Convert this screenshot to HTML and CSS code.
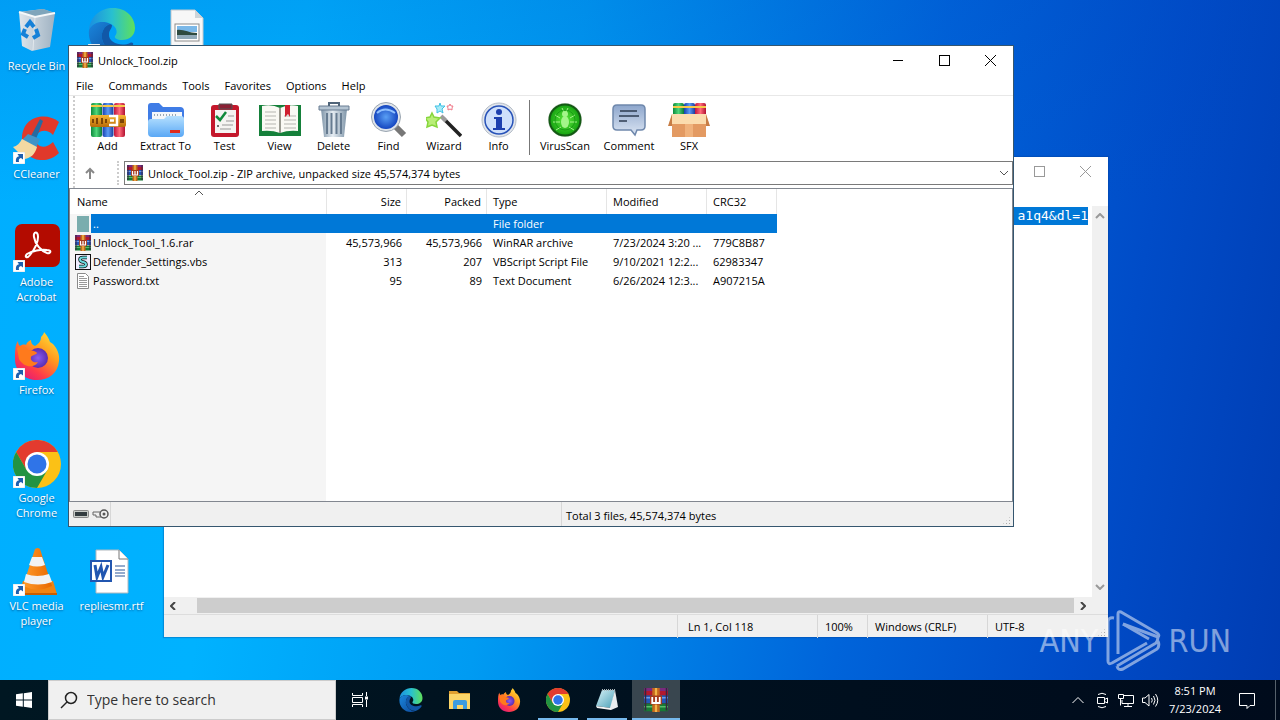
FILE: index.html
```html
<!DOCTYPE html>
<html lang="en">
<head>
<meta charset="utf-8">
<title>Desktop</title>
<link rel="stylesheet" href="styles.css">
</head>
<body>
<svg class="defs" aria-hidden="true">
  <defs>
    <linearGradient id="gRed" x1="0" x2="1"><stop offset="0" stop-color="#c0143c"/><stop offset=".5" stop-color="#ff6a7a"/><stop offset="1" stop-color="#b01030"/></linearGradient>
    <linearGradient id="gBlue" x1="0" x2="1"><stop offset="0" stop-color="#173fae"/><stop offset=".5" stop-color="#5b9bf5"/><stop offset="1" stop-color="#1b3c9c"/></linearGradient>
    <linearGradient id="gGreen" x1="0" x2="1"><stop offset="0" stop-color="#0c8a3c"/><stop offset=".5" stop-color="#4fd67a"/><stop offset="1" stop-color="#0a7a34"/></linearGradient>
    <linearGradient id="gGold" x1="0" x2="0" y1="0" y2="1"><stop offset="0" stop-color="#f7b733"/><stop offset="1" stop-color="#b86a08"/></linearGradient>
    <linearGradient id="gFolder" x1="0" x2="0" y1="0" y2="1"><stop offset="0" stop-color="#b5e0ff"/><stop offset="1" stop-color="#5aa8f5"/></linearGradient>
    <linearGradient id="gMetal" x1="0" x2="1"><stop offset="0" stop-color="#7f95a8"/><stop offset=".45" stop-color="#e6edf3"/><stop offset="1" stop-color="#7f95a8"/></linearGradient>
    <linearGradient id="gSpeech" x1="0" x2="0" y1="0" y2="1"><stop offset="0" stop-color="#8da6cc"/><stop offset="1" stop-color="#dbe5f3"/></linearGradient>
    <radialGradient id="gLens"><stop offset="0" stop-color="#5aa0f5"/><stop offset="1" stop-color="#1546c0"/></radialGradient>
    <radialGradient id="gVirus"><stop offset="0" stop-color="#5dea3c"/><stop offset="1" stop-color="#14a010"/></radialGradient>
    <linearGradient id="gFox" x1=".9" x2=".2" y1="0" y2="1"><stop offset="0" stop-color="#ffe83c"/><stop offset=".4" stop-color="#ff9a1e"/><stop offset=".75" stop-color="#ff3b4a"/><stop offset="1" stop-color="#e01a7a"/></linearGradient>
    <radialGradient id="gFoxIn"><stop offset="0" stop-color="#8a5cf0"/><stop offset="1" stop-color="#5a2cb0"/></radialGradient>
    <linearGradient id="gEdge" x1="0" x2="1"><stop offset="0" stop-color="#1b8fe0"/><stop offset=".5" stop-color="#28c0d0"/><stop offset="1" stop-color="#5fe05a"/></linearGradient>
    <linearGradient id="gEdge2" x1="0" x2="1" y1="0" y2="1"><stop offset="0" stop-color="#1a86dc"/><stop offset="1" stop-color="#0d4a9c"/></linearGradient>
    <linearGradient id="gGlass" x1="0" x2="1" y1="0" y2="1"><stop offset="0" stop-color="#d8f2f7"/><stop offset="1" stop-color="#4aa0b8"/></linearGradient>
    <linearGradient id="gCone" x1="0" x2="1"><stop offset="0" stop-color="#ff9a2a"/><stop offset="1" stop-color="#e86800"/></linearGradient>
    <linearGradient id="gBin" x1="0" x2="1"><stop offset="0" stop-color="#dfe6ec"/><stop offset="1" stop-color="#9fb2c2"/></linearGradient>
  </defs>
  <symbol id="rar" viewBox="0 0 16 16">
    <rect width="16" height="5" fill="#b3182f"/><rect width="16" height="2" fill="#7a2b7c"/>
    <rect y="5" width="16" height="5" fill="#2456b8"/><rect y="6" width="16" height="1" fill="#6f9bea"/>
    <rect y="10.500" width="16" height="5" fill="#177a35"/><rect y="12" width="16" height="1" fill="#59bc6c"/>
    <path d="M1 0v15M15 0v15" stroke="#3a2440"/>
    <rect x="5.500" width="5" height="16" fill="#c4681c"/><path d="M8 0v16" stroke="#f2b548" stroke-width="1.500"/>
    <rect x="4" y="5" width="8" height="6" fill="#a53a1c"/><path d="M5.500 6v4h5V6M8 6v4" fill="none" stroke="#fff" stroke-width="1.200"/>
  </symbol>
  <symbol id="arrow" viewBox="0 0 12 12">
    <rect width="12" height="12" fill="#fff" stroke="#b8c4cc" stroke-width=".5"/>
    <path d="M3 10C2.600 6 4 4.500 6 4.200L4.500 2H10v5.500L8 6C6 6.300 5.500 7.500 6 10z" fill="#1d5fae"/>
  </symbol>
  <symbol id="edge" viewBox="0 0 48 48">
    <path d="M1 22C2 8 13 0 25 0c14 0 22 10 22 20 0 8-6 12-13 12-5 0-8-2-7-4 3-3 2-9-4-12C15 12 5 14 1 22z" fill="url(#gEdge)"/>
    <path d="M1 22C5 14 15 12 22 16c-6 2-9 8-8 15 2 9 10 16 19 15C16 53-1 40 1 22z" fill="url(#gEdge2)"/>
    <path d="M22 16c-6 2-9 8-8 15 2 9 10 15 19 15 5-1 9-5 12-9 1-2-1-3-3-2-8 4-22 0-21-9 0-4 3-5 3-9z" fill="#1158a8"/>
  </symbol>
  <symbol id="chrome" viewBox="0 0 48 48">
    <circle cx="24" cy="24" r="24" fill="#fbc116"/>
    <path d="M3.200 12A24 24 0 0 1 44.800 12H24L13.600 30z" fill="#e33b2e"/>
    <path d="M3.200 12 13.600 30H34.400L24 48A24 24 0 0 1 3.200 12z" fill="#229342"/>
    <circle cx="24" cy="24" r="12" fill="#fff"/><circle cx="24" cy="24" r="9.500" fill="#2f74e8"/>
  </symbol>
  <symbol id="firefox" viewBox="0 0 48 48">
    <path d="M5 9c0 3 1 4 2 5 1-1 4-2 6-1 1-3 3-4 5-5 0 3 1 5 4 6 3-2 6-4 6-9 2-2 3-4 3-5 3 3 5 7 6 10l3 2c4 4 7 11 6 17-1 12-10 19-22 19S2 40 2 27C2 20 2 13 5 9z" fill="url(#gFox)"/>
    <circle cx="25" cy="26" r="10" fill="url(#gFoxIn)"/>
    <path d="M4 16c5-3 9-2 11 2 3 0 8 1 9 3-1 2-5 2-6 4-1 4 3 6 7 5-4 7-15 5-19-3z" fill="#ff7a1c"/>
  </symbol>
</svg>

<main class="desktop">
  <nav class="shortcuts" aria-label="Desktop icons">
    <a class="shortcut" href="#bin">
      <span class="pic"><svg viewBox="0 0 48 48"><path d="M6 4 30 1l12 4-5 34-18 4-10-5z" fill="url(#gBin)"/><path d="M6 4 30 1l12 4-20 4z" fill="#7fa5bb"/><path d="M6 4l16 5 20-4" fill="none" stroke="#f5f8fa" stroke-width="2"/><path d="M22 9l-2 33" stroke="#fff" opacity=".5"/><g fill="none" stroke="#1581d8" stroke-width="4"><path d="M13 19l4-5 4 5"/><path d="M23 21l2 6-5 3"/><path d="M15 29l-5-3 2-5"/></g></svg></span>
      <span>Recycle Bin</span></a>
    <a class="shortcut" href="#edge" aria-label="Browser">
      <span class="pic"><svg viewBox="0 0 48 48"><use href="#edge"/></svg><svg class="badge"><use href="#arrow"/></svg></span></a>
    <a class="shortcut" href="#picture" aria-label="Picture">
      <span class="pic"><svg viewBox="0 0 48 48"><path d="M8 2h24l8 8v36H8z" fill="#f7f7f7" stroke="#c3c8cc"/><path d="M32 2v8h8z" fill="#ccd4d9"/><rect x="12" y="16" width="24" height="17" fill="#fff" stroke="#8b8b8b"/><rect x="14" y="18" width="20" height="6" fill="#7bb8e8"/><path d="M14 22c6-1 12 3 20 3v2H14z" fill="#2f4b40"/><rect x="14" y="27" width="20" height="4" fill="#91aab9"/></svg></span></a>

    <a class="shortcut row2" href="#ccleaner">
      <span class="pic"><svg viewBox="0 0 48 48"><path d="M46 6C34-4 10-1 9 22c0 25 26 27 37 15l-6-11c-7 7-16 6-17-2-1-9 10-13 17-5z" fill="#e0392b"/><path d="M27 3l3 2-7 18-5-3z" fill="#276aa0"/><path d="M15 18l12 5-4 9-15-7z" fill="#3f93c8"/><path d="M9 23l15 8c-2 8-7 11-12 12L0 31c4-1 7-4 9-8z" fill="#f3d9a2"/></svg><svg class="badge"><use href="#arrow"/></svg></span>
      <span>CCleaner</span></a>
    <a class="shortcut row3" href="#acrobat">
      <span class="pic"><svg viewBox="0 0 48 48"><rect x="2" width="45" height="43" rx="7" fill="#b30b00"/><path d="M14 30c-3 3 0 5 3 1 4-5 8-12 8-18 0-6-5-6-4 0 1 7 7 14 13 16 4 1 5-3 0-3-6-1-15 1-20 4z" fill="none" stroke="#fff" stroke-width="2"/></svg><svg class="badge"><use href="#arrow"/></svg></span>
      <span>Adobe Acrobat</span></a>
    <a class="shortcut row4" href="#firefox">
      <span class="pic"><svg viewBox="0 0 48 48"><use href="#firefox"/></svg><svg class="badge"><use href="#arrow"/></svg></span>
      <span>Firefox</span></a>
    <a class="shortcut row5" href="#chrome">
      <span class="pic"><svg viewBox="0 0 48 48"><use href="#chrome"/></svg><svg class="badge"><use href="#arrow"/></svg></span>
      <span>Google Chrome</span></a>
    <a class="shortcut row6" href="#vlc">
      <span class="pic"><svg viewBox="0 0 48 48"><path d="M10 33h30l4 13H6z" fill="#f08412"/><path d="M6 45h38v2H6z" fill="#c95e00"/><path d="M22 1q3-2 5 0l12 37q-14 7-29 0z" fill="url(#gCone)"/><path d="M19 9h10l3 8q-8 3-16 0zM13 26q11 4 23 0l3 8q-14 5-28 0z" fill="#f2f2f2"/></svg><svg class="badge"><use href="#arrow"/></svg></span>
      <span>VLC media player</span></a>
    <a class="shortcut row6" href="#replies">
      <span class="pic"><svg viewBox="0 0 48 48"><path d="M8 2h23l9 9v34H8z" fill="#fff" stroke="#b0b8be"/><path d="M31 2v9h9" fill="#fff" stroke="#777"/><path d="M27 18h10M27 22h10M27 25h10M27 28h10" stroke="#2b579a"/><rect x="3" y="13" width="20" height="20" fill="#fff" stroke="#2156b0" stroke-width="2"/><path d="M7 17l2 12 4-10 2 10 5-12" fill="none" stroke="#2156b0" stroke-width="3"/></svg></span>
      <span>repliesmr.rtf</span></a>
  </nav>

  <section class="window notepad" aria-label="Notepad">
    <header class="titlebar">
      <span class="grow"></span>
      <button class="winbtn" aria-label="Maximize"><svg viewBox="0 0 11 11"><rect x=".5" y=".5" width="10" height="10"/></svg></button>
      <button class="winbtn" aria-label="Close"><svg viewBox="0 0 11 11"><path d="M0 0l11 11M11 0L0 11"/></svg></button>
    </header>
    <div class="note-body">
      <div class="note-text"><mark>a1q4&amp;dl=1</mark></div>
      <div class="vbar">
        <svg class="chev" viewBox="0 0 10 6"><path d="M1 5l4-4 4 4"/></svg>
        <svg class="chev" viewBox="0 0 10 6"><path d="M1 1l4 4 4-4"/></svg>
      </div>
      <div class="hbar">
        <svg class="hchev" viewBox="0 0 6 8"><path d="M5 0L1 4l4 4"/></svg>
        <span class="thumb"></span>
        <svg class="hchev" viewBox="0 0 6 8"><path d="M1 0l4 4-4 4"/></svg>
      </div>
      <div class="corner"></div>
    </div>
    <footer class="note-status">
      <span></span><span>Ln 1, Col 118</span><span>100%</span><span>Windows (CRLF)</span><span>UTF-8</span>
      <i class="grip"></i>
    </footer>
  </section>

  <section class="window winrar" aria-label="Unlock_Tool.zip">
    <header class="titlebar">
      <svg class="ico16"><use href="#rar"/></svg>
      <h1 class="grow">Unlock_Tool.zip</h1>
      <button class="winbtn" aria-label="Minimize"><svg viewBox="0 0 11 11"><path d="M0 5.500h10"/></svg></button>
      <button class="winbtn" aria-label="Maximize"><svg viewBox="0 0 11 11"><rect x=".5" y=".5" width="10" height="10"/></svg></button>
      <button class="winbtn" aria-label="Close"><svg viewBox="0 0 11 11"><path d="M0 0l11 11M11 0L0 11"/></svg></button>
    </header>
    <nav class="menubar" aria-label="Menu">
      <button>File</button><button>Commands</button><button>Tools</button><button>Favorites</button><button>Options</button><button>Help</button>
    </nav>
    <div class="toolbar" role="toolbar">
      <button><svg viewBox="0 0 36 36"><rect x="1" y="1" width="11" height="34" rx="2" fill="url(#gGreen)"/><rect x="12.500" y="1" width="11" height="34" rx="2" fill="url(#gBlue)"/><rect x="24" y="1" width="11" height="34" rx="2" fill="url(#gRed)"/><path d="M1 4h11M12.500 4h11M24 4h11" stroke="#f7c948" stroke-width="2"/><rect y="13" width="36" height="12" rx="2" fill="url(#gGold)"/><path d="M3 17v4M7 16v6M12 16v6M16 17v4" stroke="#7c4406" stroke-width="2"/><path d="M19 14h8v9h-8M20 18.500h4" fill="none" stroke="#fff" stroke-width="2.500"/><path d="M30 17h4v4h-4z" fill="#7c4406"/></svg>Add</button>
      <button><svg viewBox="0 0 36 36"><path d="M0 4q0-3 3-3h8l4 4h17q4 0 4 4v22H0z" fill="#3f7ce6"/><path d="M4 10h30v10H4z" fill="#f4f7fa"/><path d="M6 13h24" stroke="#9aa8b5" stroke-width="2" stroke-dasharray="1 2"/><path d="M0 20q0-3 3-3h13l3-3h14q3 0 3 3v14q0 4-4 4H4q-4 0-4-4z" fill="url(#gFolder)"/><rect x="22" y="28" width="10" height="3" fill="#e02a1c"/></svg>Extract To</button>
      <button><svg viewBox="0 0 36 36"><rect x="4" y="3" width="28" height="32" rx="3" fill="#c4182c"/><path d="M8 8h21v23H8z" fill="#f5f4f2"/><path d="M12 2h13v5H12z" fill="#8a2034" stroke="#555"/><path d="M9 14l4 4 6-8" fill="none" stroke="#118a3c" stroke-width="2.500"/><path d="M19 19h8M15 23h11M13 27h11M21 14h6" stroke="#999"/><circle cx="11" cy="24" r="1" fill="#444"/></svg>Test</button>
      <button><svg class="wide" viewBox="0 0 44 36"><path d="M1 3h42v31H1z" fill="#15803a"/><path d="M4 4q10-2 18 2 8-4 18-2v25q-10-1-18 2-8-3-18-2z" fill="#faf9f4"/><path d="M22 6v25" stroke="#9a9a90" stroke-width="2"/><path d="M7 10h11M7 14h11M7 18h11M7 22h11M26 14h12M26 18h12M26 22h12M26 26h12M7 26h11" stroke="#b5b5b0"/><path d="M27 3h5v12l-2-3-3 3z" fill="#cf2030"/></svg>View</button>
      <button><svg viewBox="0 0 36 36"><path d="M5 7h26l-3 28H8z" fill="url(#gMetal)"/><path d="M11 11v21M15.500 11v21M20.500 11v21M25 11v21" stroke="#667b90" stroke-width="2"/><path d="M3 4h30v4H3z" fill="#b4c4d2" stroke="#687d92"/><path d="M13 4V1h10v3" fill="none" stroke="#50657a" stroke-width="2"/></svg>Delete</button>
      <button><svg viewBox="0 0 36 36"><path d="M24 24l9 9" stroke="#777" stroke-width="6"/><circle cx="15" cy="15" r="14.500" fill="#dfe4ea" stroke="#9aa5b0"/><circle cx="15" cy="15" r="12" fill="url(#gLens)"/><path d="M6 11q8-7 18 0" fill="none" stroke="#8fc0ff" stroke-width="2"/></svg>Find</button>
      <button><svg viewBox="0 0 36 36"><path d="M17 16l18 18" stroke="#222" stroke-width="3.500"/><path d="M15 14l5 5" stroke="#9c9c9c" stroke-width="4"/><path d="M6 11l2 4 6 1-4 4 1 5-5-2-5 2 1-5-3-4 5-1z" fill="#b9ee78" stroke="#86d63c" stroke-width="1.500"/><path d="M14 1l1 3h4l-3 3 1 4-3-2-3 2 0-4-2-3h4z" fill="#a8ecf8" stroke="#40c0e4"/><path d="M24 2l1 2h2l-1 2 0 2-2-1-2 1 0-2-1-2h2z" fill="#fff" stroke="#f07888"/></svg>Wizard</button>
      <button><svg viewBox="0 0 36 36"><circle cx="18" cy="18" r="17" fill="#e2e6ec" stroke="#b5bdc7"/><circle cx="18" cy="18" r="14" fill="#cfe0fb" stroke="#2752b8" stroke-width="1.500"/><circle cx="18" cy="10" r="3" fill="#1d3fae"/><path d="M13 15h8v11h3v2H12v-2h3v-9h-2z" fill="#1d3fae"/></svg>Info</button>
      <span class="rule"></span>
      <button><svg viewBox="0 0 36 36"><circle cx="18" cy="18" r="17" fill="#cfd6cf"/><circle cx="18" cy="18" r="15.500" fill="url(#gVirus)" stroke="#145a14" stroke-width="2"/><ellipse cx="18" cy="20" rx="4" ry="6" fill="#a4f58a"/><circle cx="18" cy="12" r="3" fill="#a4f58a"/><path d="M8 13l5 3M28 13l-5 3M6 20h7M30 20h-7M9 28l5-3M27 28l-5-3M15 6l2 4M21 6l-2 4" stroke="#a4f58a" stroke-width="1"/><circle cx="18" cy="18" r="10" fill="none" stroke="#0d8a10" opacity=".6"/></svg>VirusScan</button>
      <button><svg viewBox="0 0 36 36"><path d="M6 3h24q4 0 4 4v17q0 4-4 4h-4l-2 5-4-5H6q-4 0-4-4V7q0-4 4-4z" fill="url(#gSpeech)" stroke="#6f88ac" stroke-width="1.500"/><path d="M9 9h17M8 14h20M8 19h8" stroke="#2e3c52" stroke-width="1.700"/></svg>Comment</button>
      <button><svg class="wide" viewBox="0 0 44 36"><rect x="6" y="1" width="11" height="15" rx="2" fill="url(#gGreen)"/><rect x="17" y="1" width="11" height="15" rx="2" fill="url(#gBlue)"/><rect x="28" y="1" width="11" height="15" rx="2" fill="url(#gRed)"/><path d="M6 5h33" stroke="#f7c948" stroke-width="2"/><path d="M5 14h34v21H5z" fill="#e39a62"/><path d="M5 12h34l3 10H2z" fill="#fbdcae"/><path d="M5 12L1 24h4zM39 12l4 12h-4z" fill="#c77d45"/><path d="M18 22h8v13h-8z" fill="#f0b27c"/></svg>SFX</button>
    </div>
    <div class="addressbar">
      <button class="up" aria-label="Up one level"><svg viewBox="0 0 12 12"><path d="M6 12V2M2 6l4-4 4 4"/></svg></button>
      <button class="combo"><svg class="ico16"><use href="#rar"/></svg><span class="grow">Unlock_Tool.zip - ZIP archive, unpacked size 45,574,374 bytes</span><svg class="chev" viewBox="0 0 10 6"><path d="M1 1l4 4 4-4"/></svg></button>
    </div>
    <div class="filelist">
      <table>
        <colgroup><col class="c-name"><col class="c-num"><col class="c-num"><col class="c-type"><col class="c-mod"><col class="c-crc"></colgroup>
        <thead><tr><th>Name<svg class="chev sort" viewBox="0 0 10 6"><path d="M1 5l4-4 4 4"/></svg></th><th class="num">Size</th><th class="num">Packed</th><th>Type</th><th>Modified</th><th>CRC32</th></tr></thead>
        <tbody>
          <tr class="selected"><td class="name"><div><svg class="ico16" viewBox="0 0 16 16"><path d="M2 0h12v16H2z" fill="#7aadae"/></svg><span>..</span></div></td><td></td><td></td><td>File folder</td><td></td><td></td></tr>
          <tr><td class="name"><div><svg class="ico16"><use href="#rar"/></svg><span>Unlock_Tool_1.6.rar</span></div></td><td class="num">45,573,966</td><td class="num">45,573,966</td><td>WinRAR archive</td><td>7/23/2024 3:20 ...</td><td>779C8B87</td></tr>
          <tr><td class="name"><div><svg class="ico16" viewBox="0 0 16 16"><rect x=".5" y=".5" width="15" height="15" fill="#eef" stroke="#111"/><path d="M12 3.500H8q-3 0-3 2t3 2.500 3 2.500-3 2H4" fill="none" stroke="#111" stroke-width="3.500"/><path d="M12 3.500H8q-3 0-3 2t3 2.500 3 2.500-3 2H4" fill="none" stroke="#6cdbe0" stroke-width="2"/></svg><span>Defender_Settings.vbs</span></div></td><td class="num">313</td><td class="num">207</td><td>VBScript Script File</td><td>9/10/2021 12:2...</td><td>62983347</td></tr>
          <tr><td class="name"><div><svg class="ico16" viewBox="0 0 16 16"><path d="M2.500.5h8l3 3v12h-11z" fill="#fff" stroke="#8a8a8a"/><path d="M4 5.500h8M4 7.500h8M4 9.500h8M4 11.500h8M4 13.500h8M4 3.500h5" stroke="#999"/></svg><span>Password.txt</span></div></td><td class="num">95</td><td class="num">89</td><td>Text Document</td><td>6/26/2024 12:3...</td><td>A907215A</td></tr>
        </tbody>
      </table>
    </div>
    <footer class="rar-status">
      <span class="drive"><svg width="16" height="8" viewBox="0 0 16 8"><rect x=".5" y=".5" width="15" height="7" rx="1" fill="#c8ccc8" stroke="#888"/><rect x="2" y="2" width="12" height="4" fill="#333c40"/></svg><svg width="17" height="10" viewBox="0 0 17 10"><circle cx="12" cy="5" r="4" fill="#eee" stroke="#555" stroke-width="1.500"/><circle cx="12" cy="5" r="1.500" fill="#555"/><path d="M8 3H1v3h3v2h5" fill="none" stroke="#666"/></svg></span>
      <span></span>
      <span>Total 3 files, 45,574,374 bytes</span>
      <i class="grip"></i>
    </footer>
  </section>

  <div class="watermark">
    <span>ANY</span>
    <svg viewBox="0 0 56 62"><g fill="none" stroke="#fff" stroke-width="3" stroke-linejoin="round"><path d="M9 8q-6-1-6 4v39q0 4 4 2l35-20"/><path d="M13 44V4q0-3 3-2l36 21q3 2 1 4L18 14"/><path d="M18 14l26 15M12 56l39-23q3-4 1-8M12 56q1 5 6 3l34-20q3-3 1-8"/></g></svg>
    <span>RUN</span>
  </div>
</main>

<footer class="taskbar">
  <button class="task" aria-label="Start"><svg class="start" viewBox="0 0 16 16"><path d="M0 2.300L6.800 1.300v6.200H0zM7.800 1.200L16 0v7.500H7.800zM0 8.500h6.800v6.200L0 13.700zM7.800 8.500H16V16l-8.200-1.200z" fill="#fff"/></svg></button>
  <label class="search"><svg viewBox="0 0 18 18"><circle cx="11" cy="7" r="5.500"/><path d="M7 11l-6 6"/></svg><input type="text" placeholder="Type here to search" aria-label="Search"></label>
  <div class="tasks">
    <button class="task" aria-label="Task View"><svg class="line" viewBox="0 0 18 18"><path d="M1.500 2v2.500h10V2M1.500 16v-2.500h10V16M1.500 6.500h10v5h-10zM15.500 1v4M15.500 9v7"/><path d="M14 5.500h3v3h-3z" fill="#fff" stroke="none"/></svg></button>
    <button class="task" aria-label="Edge"><svg class="ico24"><use href="#edge"/></svg></button>
    <button class="task" aria-label="File Explorer"><svg class="ico24" viewBox="0 0 24 24"><path d="M1 3h8l2 2h11v5H1z" fill="#e0a030"/><path d="M1 6h21v15H1z" fill="#fbd568"/><path d="M5 21v-7q0-2 2-2h10q2 0 2 2v7h-4v-4H9v4z" fill="#3b9be0"/></svg></button>
    <button class="task" aria-label="Firefox"><svg class="ico24"><use href="#firefox"/></svg></button>
    <button class="task open" aria-label="Chrome"><svg class="ico24"><use href="#chrome"/></svg></button>
    <button class="task open" aria-label="Notepad"><svg class="ico24" viewBox="0 0 24 24"><path d="M7 2h13L16 20 1 18z" fill="url(#gGlass)"/><path d="M20 2l3 17-7 3-1-2z" fill="#e8ecee"/><path d="M1 18l15 2v2L2 20z" fill="#f5f5f5"/><path d="M7 2h13" stroke="#a8b4b8" stroke-width="2" stroke-dasharray="1 1"/></svg></button>
    <button class="task active" aria-label="WinRAR"><svg class="ico24"><use href="#rar"/></svg></button>
  </div>
  <div class="tray">
    <svg viewBox="0 0 18 18"><path d="M3.500 12L9 6.500l5.500 5.500"/></svg>
    <svg viewBox="0 0 18 18"><path d="M4.500 6.500h7v6h-7zM11.500 8.500l3-1.500v5l-3-1.500M5 3.500q4-2.500 8 0M5 15.500q4 2.500 8 0"/></svg>
    <svg viewBox="0 0 18 18"><path d="M6 4.500h10.500v8H5V9M11 12.500v3M7 15.500h8M1.500 3.500h5v4h-5zM3.500 7.500v7"/></svg>
    <svg viewBox="0 0 18 18"><path d="M1.500 7v4.500H4l4 3.500V3.500L4 7zM10.500 7q1.500 2.300 0 4.500M12.500 5q3 4.300 0 8.500M14.500 3q4.500 6.300 0 12.500"/></svg>
    <time>8:51 PM<br>7/23/2024</time>
    <button aria-label="Notifications"><svg viewBox="0 0 18 18"><path d="M1.500 2.500h15v12H12l-3 3v-3H1.500z"/></svg></button>
  </div>
</footer>
</body>
</html>
```

FILE: styles.css
```css
* { box-sizing: border-box; }
html, body { height: 100%; }
body {
  margin: 0;
  display: flex;
  flex-direction: column;
  overflow: hidden;
  font: 11px/15px "Open Sans", "Noto Sans", sans-serif;
  color: #000;
}
button { font: inherit; color: inherit; background: none; border: 0; padding: 0; margin: 0; }
svg { display: block; flex: none; }
.defs { position: absolute; width: 0; height: 0; }
.grow { flex: 1; text-align: left; }
.ico16 { width: 16px; height: 16px; }
.ico24 { width: 24px; height: 24px; }

.desktop {
  position: relative;
  flex: 1;
  min-height: 0;
  overflow: hidden;
  background:
    linear-gradient(rgba(0, 70, 190, .16), transparent 30%),
    linear-gradient(100deg, #00aeff 0%, #00b2ff 22%, #009bf2 42%, #0064da 68%, #004cc8 85%, #003cb2 100%);
}

/* Desktop icons */
.shortcuts { display: grid; grid-template-columns: repeat(3, 75px); grid-auto-rows: 108px; padding-top: 8px; margin-left: -1px; }
.shortcut { display: flex; flex-direction: column; align-items: center; gap: 2px; padding: 0 6px; color: #fff; text-align: center; text-decoration: none; text-shadow: 0 1px 2px rgba(0, 40, 90, .6); white-space: nowrap; }
.shortcut > span:last-child { min-width: 0; }
.row3, .row5, .row6 { white-space: normal; }
.row2, .row3, .row4, .row5, .row6 { grid-column-start: 1; }
.row6 + .row6 { grid-column-start: 2; white-space: nowrap; }
.pic { position: relative; width: 48px; height: 48px; }
.badge { position: absolute; left: 0; bottom: 0; width: 12px; height: 12px; }

/* Windows */
.window { position: absolute; display: flex; flex-direction: column; background: #fff; }
.winrar { inset: 45px 266px 153px 68px; border: 1px solid #35566f; }
.notepad { inset: 157px 172px 43px 164px; box-shadow: 0 0 1px 1px rgba(0, 60, 140, .3); }
.titlebar { display: flex; align-items: center; height: 30px; padding: 0 0 2px 8px; }
.titlebar h1 { margin: 0 0 0 5px; font: inherit; }
.winbtn { width: 46px; height: 28px; display: grid; place-items: center; }
.winbtn svg { width: 11px; height: 11px; fill: none; stroke: #000; }
.notepad .winbtn svg { stroke: #999; }
.chev { width: 10px; height: 6px; fill: none; stroke: #555; }
.grip { width: 9px; height: 9px; margin: auto 2px 1px auto; background: radial-gradient(circle, #aaa 1px, transparent 1px) 0 0 / 3px 3px; clip-path: polygon(100% 0, 100% 100%, 0 100%); }

.menubar { display: flex; gap: 1px; height: 20px; border-bottom: 1px solid #e8e8e8; }
.menubar button { padding: 0 7px; }
.toolbar { display: grid; grid-template-columns: 55px 61px 57px 53px 55px 55px 56px 53px 9px 62px 66px 54px; height: 62px; margin-left: 4px; padding: 6px 0 3px 5px; border-left: 2px dotted #ccc; }
.toolbar button { display: flex; flex-direction: column; align-items: center; white-space: nowrap; }
.toolbar svg { width: 36px; height: 36px; }
.toolbar .wide { width: 44px; }
.rule { width: 1px; margin: -2px auto 0; background: #777; }
.addressbar { display: flex; height: 30px; padding: 3px 0; margin-left: 4px; border-left: 2px dotted #ccc; }
.up { width: 44px; margin-right: 5px; border-right: 2px dotted #ccc; display: grid; place-items: center; padding-right: 12px; }
.up svg { width: 12px; height: 12px; fill: none; stroke: #888; stroke-width: 2; }
.combo { flex: 1; display: flex; align-items: center; gap: 5px; height: 24px; padding: 0 3px 0 2px; border: 1px solid #7a7a7a; }

.filelist { flex: 1; min-height: 0; border: 1px solid #828790; background: linear-gradient(to right, #f5f5f5 256px, #fff 256px); }
table { table-layout: fixed; width: 707px; border-collapse: separate; border-spacing: 0; white-space: nowrap; }
.c-name { width: 257px; } .c-num { width: 80px; } .c-type { width: 120px; } .c-mod { width: 100px; } .c-crc { width: 70px; }
thead { background: #fff; }
th { position: relative; height: 25px; padding: 0 6px; font-weight: 400; text-align: left; border-right: 1px solid #e5e5e5; }
th:first-child { padding-left: 7px; }
.sort { position: absolute; top: 1px; left: 124px; }
td { height: 19px; padding: 0 6px; overflow: hidden; }
td.num { text-align: right; padding: 0 5px; }
th.num { text-align: right; padding: 0 5px; }
.name { padding: 0; }
.name div { display: flex; align-items: center; padding-left: 5px; }
.name span { flex: 1; line-height: 19px; padding-left: 2px; }
.selected td:not(.name), .selected span { background: #0078d7; color: #fff; }

.rar-status { display: flex; height: 24px; align-items: center; background: #f0f0f0; }
.rar-status span:nth-child(2) { flex: 0 1 451px; border-right: 1px solid #d7d7d7; align-self: stretch; }
.rar-status span:nth-child(3) { padding: 3px 0 0 4px; }
.drive { display: flex; align-items: center; align-self: stretch; gap: 3px; width: 42px; padding-left: 4px; border-right: 1px solid #d7d7d7; }

/* Notepad */
.note-body { flex: 1; min-height: 0; margin-top: 19px; display: grid; grid-template: 1fr 17px / 1fr 16px; }
.note-text { padding: 1px 4px 0 0; text-align: right; font: 13px/18px "DejaVu Sans Mono", monospace; }
mark { display: inline-block; padding-left: 16px; background: #0078d7; color: #fff; }
.vbar { display: flex; flex-direction: column; justify-content: space-between; align-items: center; padding: 7px 0; background: #f0f0f0; }
.vbar .chev { stroke: #999; stroke-width: 2; }
.hbar { display: flex; align-items: center; gap: 21px; padding: 0 6px; background: #f0f0f0; }
.hbar .hchev:last-child { margin-left: -15px; }
.hchev { width: 6px; height: 8px; fill: none; stroke: #444; stroke-width: 2; }
.thumb { flex: 1; height: 15px; background: #cdcdcd; }
.corner { background: #f0f0f0; }
.note-status { display: grid; grid-template-columns: 1fr 140px 50px 120px 100px 20px; height: 23px; line-height: 23px; background: #f0f0f0; border-top: 1px solid #ddd; }
.note-status span { border-right: 1px solid #d7d7d7; padding-left: 7px; }
.note-status span:nth-child(2) { padding-left: 10px; }
.note-status span:nth-child(5) { border: 0; }

.watermark { position: absolute; right: 49px; bottom: 8px; display: flex; align-items: center; gap: 7px; color: #fff; opacity: .5; font: 32px/62px "DejaVu Sans Condensed", sans-serif; }
.watermark svg { width: 56px; height: 62px; }

/* Taskbar */
.taskbar { display: flex; height: 40px; background: linear-gradient(to right, #001722, #000b1c); color: #fff; }
.task { width: 48px; height: 40px; display: grid; place-items: center; }
.start { width: 16px; height: 16px; }
.search { display: flex; align-items: center; gap: 9px; width: 288px; padding-left: 11px; background: #f0f0f0; border: 1px solid #ccc; }
.search svg { width: 18px; height: 18px; fill: none; stroke: #222; stroke-width: 1.500; }
.search input { flex: 1; min-width: 0; border: 0; padding: 0; background: none; font: 14px/20px "Open Sans", sans-serif; outline: 0; }
.search input::placeholder { color: #333; opacity: 1; }
.tasks { display: flex; gap: 1px; flex: 1; }
.tasks .task:first-child { margin-right: 2px; }
.line { width: 18px; height: 18px; fill: none; stroke: #fff; }
.open { background: linear-gradient(#76b9ed, #76b9ed) center bottom / 40px 2px no-repeat; }
.active { background: linear-gradient(#76b9ed, #76b9ed) center bottom / 100% 2px no-repeat #39464f; }
.tray { display: flex; align-items: center; gap: 6px; margin-right: 4px; padding-right: 19px; border-right: 1px solid #56616c; }
.tray svg { width: 18px; height: 18px; fill: none; stroke: #fff; }
.tray time { width: 58px; margin: 0 8px 0 1px; text-align: center; line-height: 18px; white-space: nowrap; }
```
